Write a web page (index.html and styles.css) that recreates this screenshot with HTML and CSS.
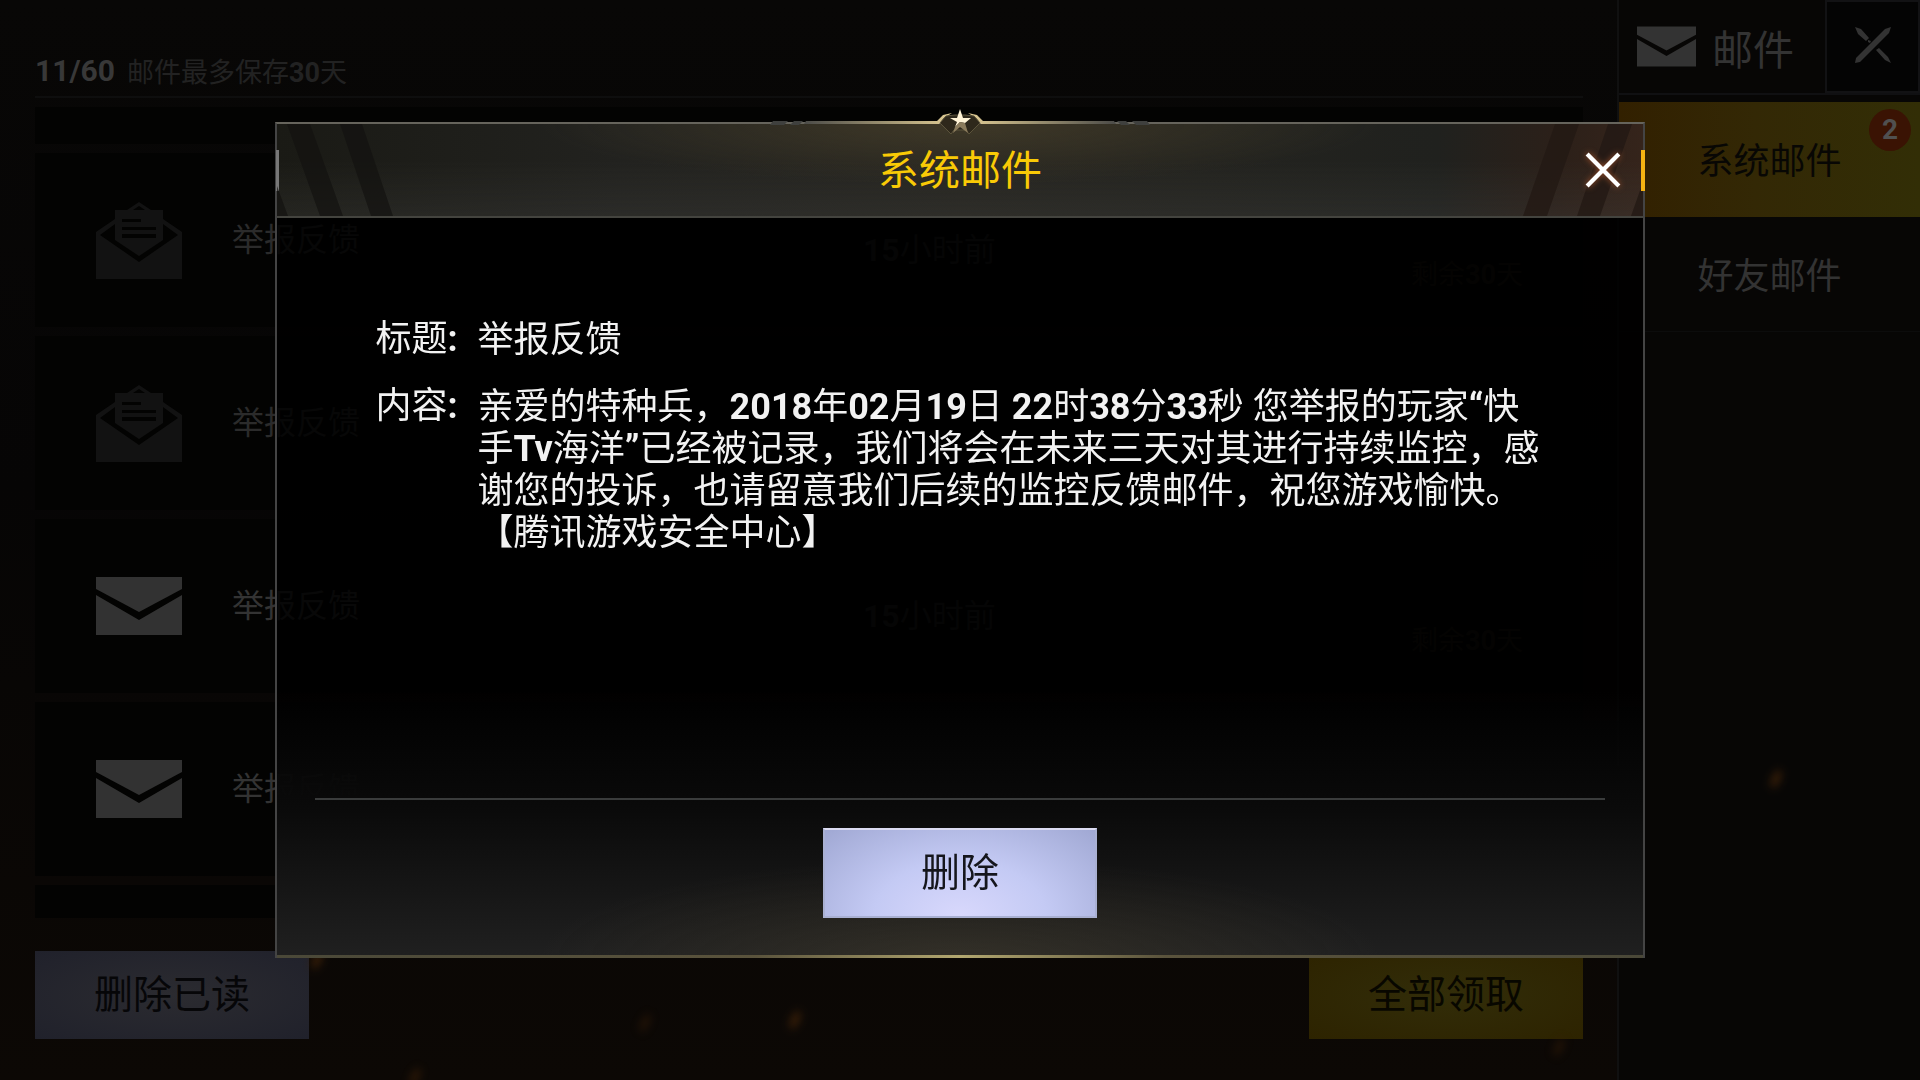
FILE: index.html
```html
<!DOCTYPE html>
<html lang="zh-CN">
<head>
  <meta charset="UTF-8">
  <meta name="viewport" content="width=device-width, initial-scale=1.0">
  <title>系统邮件</title>
  <link rel="stylesheet" href="styles.css">
</head>
<body>
  <!-- shared icons -->
  <svg class="icon-defs" aria-hidden="true">
    <symbol id="mail" viewBox="0 0 86 58">
      <path d="M0 0H86V12L43 35L0 12Z"/>
      <path d="M0 18L43 43L86 18V58H0Z"/>
    </symbol>
    <symbol id="mail-open" viewBox="0 0 86 77">
      <path d="M0 30L19 17V22L4 33L43 60L82 33L67 22V17L86 30V77H0Z"/>
      <path d="M31 8L43 0L55 8H49L43 4L37 8Z"/>
      <path fill-rule="evenodd" d="M19 8H67V38L43 54L19 38ZM26 17V20H45V17ZM26 25V28H60V25ZM26 32V36H60V32Z"/>
    </symbol>
  </svg>

  <div class="screen">
    <main class="inbox">
      <header class="inbox-head">
        <b class="count">11/60</b>
        <span class="hint">邮件最多保存<b>30</b>天</span>
      </header>

      <ul class="mail-list">
        <li class="mail cut-top"></li>
        <li class="mail read">
          <svg class="mail-icon open"><use href="#mail-open"/></svg>
          <span class="mail-title">举报反馈</span>
          <span class="mail-time"><b>15</b>小时前</span>
          <span class="mail-left">剩余<b>30</b>天</span>
        </li>
        <li class="mail read">
          <svg class="mail-icon open"><use href="#mail-open"/></svg>
          <span class="mail-title">举报反馈</span>
        </li>
        <li class="mail">
          <svg class="mail-icon"><use href="#mail"/></svg>
          <span class="mail-title">举报反馈</span>
          <span class="mail-time"><b>15</b>小时前</span>
          <span class="mail-left">剩余<b>30</b>天</span>
        </li>
        <li class="mail">
          <svg class="mail-icon"><use href="#mail"/></svg>
          <span class="mail-title">举报反馈</span>
        </li>
        <li class="mail cut-bottom"></li>
      </ul>

      <footer class="inbox-foot">
        <button class="btn btn-dim-blue">删除已读</button>
        <button class="btn btn-dim-gold">全部领取</button>
      </footer>
    </main>

    <aside class="sidebar">
      <div class="side-head">
        <div class="side-title">
          <svg class="side-icon"><use href="#mail"/></svg>
          <span>邮件</span>
        </div>
        <button class="side-close" aria-label="关闭">
          <svg viewBox="0 0 36 36">
            <path d="M0 0L6 2L14 11L11 14L3 7Z M21 23L24 21L33 30L36 36L30 33Z"/>
            <path d="M13 13L16 14L15 16L13 15Z"/>
            <path d="M36 0L34 6L5 35L0 36L1 31L30 2Z"/>
          </svg>
        </button>
      </div>
      <nav class="tabs">
        <button class="tab active">系统邮件<span class="badge">2</span></button>
        <button class="tab">好友邮件</button>
      </nav>
    </aside>
  </div>

  <i class="ember e1"></i>
  <i class="ember e2"></i>
  <i class="ember e3"></i>
  <i class="ember e4"></i>
  <i class="ember e5"></i>
  <i class="ember e6"></i>

  <div class="overlay">
    <section class="modal" role="dialog" aria-labelledby="modalTitle">
      <svg class="crest" viewBox="0 0 380 28" aria-hidden="true">
        <defs>
          <linearGradient id="wing">
            <stop offset="0" stop-color="#4b4b48"/>
            <stop offset=".5" stop-color="#e8d398"/>
            <stop offset="1" stop-color="#4b4b48"/>
          </linearGradient>
        </defs>
        <path fill="#3f403e" d="M3 12H18L14 16H0Z M24 12H33L29 16H20Z M377 12H362L366 16H380Z M356 12H347L351 16H360Z"/>
        <path fill="url(#wing)" d="M36 12H167L173 6L182 4L174 9L169 15H34Z M344 12H213L207 6L198 4L206 9L211 15H346Z"/>
        <path fill="#2e281b" stroke="#5c543c" d="M170 14L176 7L185 6H195L204 7L210 14L199 25L196 21H184L181 25Z"/>
        <path fill="#fff3d6" d="M190 0L193 9L201 9L195 14L190 13L185 18L187 13L180 9L187 9Z"/>
        <path fill="#8b7b5c" d="M195 14L198 24L190 18L183 24L185 18L190 13Z"/>
      </svg>

      <header class="modal-head">
        <svg class="stripes left" viewBox="0 0 130 92" preserveAspectRatio="none">
          <path d="M10 0H33L66 92H43Z M63 0H85L116 92H94Z M0 62L11 92H0Z"/>
        </svg>
        <svg class="stripes right" viewBox="0 0 150 92" preserveAspectRatio="none">
          <path d="M62 0H86L54 92H30Z M115 0H139L107 92H84Z M150 58L138 92H150Z"/>
        </svg>
        <h1 class="modal-title" id="modalTitle">系统邮件</h1>
        <button class="modal-close" aria-label="关闭">
          <svg viewBox="0 0 34 34"><path d="M2 2L32 32M32 2L2 32"/></svg>
        </button>
      </header>

      <dl class="letter">
        <dt>标题<b>:</b></dt>
        <dd>举报反馈</dd>
        <dt>内容<b>:</b></dt>
        <dd>亲爱的特种兵，<b>2018</b>年<b>02</b>月<b>19</b>日<b> 22</b>时<b>38</b>分<b>33</b>秒<b> </b>您举报的玩家<b>“</b>快手<b>Tv</b>海洋<b>”</b>已经被记录，我们将会在未来三天对其进行持续监控，感谢您的投诉，也请留意我们后续的监控反馈邮件，祝您游戏愉快。<br>【腾讯游戏安全中心】</dd>
      </dl>

      <footer class="modal-foot">
        <button class="btn btn-blue">删除</button>
      </footer>
    </section>
  </div>
</body>
</html>
```

FILE: styles.css
```css
* {
  box-sizing: border-box;
}
body {
  margin: 0;
  background: linear-gradient(#080706, #060505 45%, #0c0805);
  color: #333;
  font-family: Roboto, "Noto Sans CJK SC", sans-serif;
  overflow: hidden;
}
b {
  font-weight: 700;
}
button {
  border: none;
  padding: 0;
  background: none;
  color: inherit;
  font-family: inherit;
  cursor: pointer;
}
.icon-defs {
  position: absolute;
  width: 0;
  height: 0;
}

/* inbox behind the dialog */
.screen {
  display: grid;
  grid-template-columns: 1fr 303px;
  min-height: 100vh;
}
.inbox {
  display: flex;
  flex-direction: column;
  padding: 44px 34px 41px 35px;
}
.inbox-head {
  display: flex;
  align-items: center;
  gap: 12px;
  height: 54px;
  border-bottom: 2px solid #0e0e0e;
}
.count {
  font-size: 30px;
  color: #383838;
}
.hint {
  font-size: 27px;
  color: #222;
}
.mail-list {
  display: flex;
  flex-direction: column;
  gap: 9px;
  flex: 1;
  margin: 9px 0 33px;
  padding: 0;
  list-style: none;
}
.mail {
  display: grid;
  grid-template-columns: 86px 681px 1fr 172px;
  align-items: center;
  height: 174px;
  padding-left: 61px;
  background: #030302;
  font-size: 32px;
}
.cut-top {
  height: 37px;
}
.cut-bottom {
  height: auto;
  flex: 1;
}
.mail-icon {
  width: 86px;
  height: 58px;
  fill: #323232;
}
.mail-icon.open {
  height: 77px;
  fill: #121212;
}
.mail-title {
  padding: 0 0 6px 50px;
}
.read .mail-title {
  color: #2b2b2b;
}
.mail-time {
  padding-top: 14px;
  color: #202020;
}
.mail-left {
  padding-top: 64px;
  font-size: 27px;
  color: #1c180f;
}
.inbox-foot {
  display: flex;
  justify-content: space-between;
}

.btn {
  width: 274px;
  height: 88px;
  padding-bottom: 8px;
  font-size: 39px;
}
.btn-dim-blue {
  background: radial-gradient(ellipse at center, #2b2b30, #20212b);
  color: #060608;
}
.btn-dim-gold {
  background: radial-gradient(ellipse at center, #322d09, #2d2300);
  color: #080700;
}
.btn-blue {
  height: 90px;
  border: 2px solid #a9b0d2;
  border-top-color: #dcdcf2;
  background: radial-gradient(ellipse at 50% 100%, #d8d8fc, #c4caf4 45%, #a0a8d3);
  color: #15161c;
}

/* right column */
.sidebar {
  border-left: 2px solid #101010;
  background: #070605;
}
.side-head {
  display: flex;
  height: 95px;
  border-bottom: 2px solid #101012;
}
.side-title {
  display: flex;
  align-items: center;
  gap: 16px;
  flex: 1;
  padding-left: 18px;
  font-size: 41px;
}
.side-icon {
  width: 59px;
  height: 41px;
  fill: #333;
}
.side-close {
  width: 95px;
  border: 2px solid #121214;
  background: #040404;
}
.side-close svg {
  width: 36px;
  height: 36px;
  fill: #333;
}
.tabs {
  display: flex;
  flex-direction: column;
  padding-top: 7px;
}
.tab {
  position: relative;
  height: 115px;
  padding-bottom: 3px;
  border-bottom: 1px solid #0c0c0c;
  font-size: 36px;
}
.tab.active {
  border-bottom: none;
  background: linear-gradient(90deg, #322000, #332805 45%, #322e06);
  color: #080704;
}
.badge {
  position: absolute;
  top: 7px;
  right: 9px;
  width: 42px;
  height: 42px;
  border-radius: 50%;
  background: #3a1303;
  color: #505050;
  font-size: 28px;
  font-weight: 700;
  line-height: 42px;
}

.ember {
  position: absolute;
  width: 8px;
  height: 20px;
  border-radius: 50%;
  background: #3a1f08;
  filter: blur(4px);
  transform: rotate(25deg);
}
.e1 { left: 41.2%; top: 93.5%; }
.e2 { left: 92.3%; top: 71.2%; }
.e3 { left: 33.4%; top: 93.8%; opacity: .5; }
.e4 { left: 21.4%; top: 98.8%; opacity: .7; }
.e5 { left: 81%; top: 96%; opacity: .5; }
.e6 { left: 16.3%; top: 88%; }

/* dialog */
.overlay {
  position: fixed;
  inset: 0;
  display: flex;
  align-items: center;
  justify-content: center;
}
.modal {
  position: relative;
  display: flex;
  flex-direction: column;
  width: 71.4%;
  min-height: 77.4%;
  border: 2px solid #444;
  border-top-color: #66645c;
  border-bottom: none;
  background:
    linear-gradient(90deg, #4a4838, #5a533c 35%, #b3a870 50%, #5a533c 65%, #4a4838) bottom / 100% 3px no-repeat,
    radial-gradient(ellipse 420px 100px at 50% 100%, rgba(80, 72, 52, .4), transparent),
    linear-gradient(transparent 68%, #0a0a0a 82%, #202020),
    rgba(0, 0, 0, .84);
}
.crest {
  position: absolute;
  top: -15px;
  left: 50%;
  z-index: 1;
  width: 380px;
  height: 28px;
  transform: translateX(-50%);
}
.modal-head {
  position: relative;
  display: flex;
  align-items: center;
  justify-content: center;
  height: 94px;
  border-bottom: 2px solid #44443f;
  background:
    radial-gradient(ellipse 420px 60px at 50% 0, rgba(100, 85, 50, .4), transparent),
    linear-gradient(rgba(0, 0, 0, 0) 40%, rgba(70, 70, 68, .25)),
    linear-gradient(90deg, #1a1a15, #22221f 25%, #262520 50%, #20211e 85%, #2c2019 94%, #35241b);
}
/* side ticks on the frame */
.modal-head::before,
.modal-head::after {
  content: "";
  position: absolute;
  top: 26px;
  left: -1px;
  width: 3px;
  height: 41px;
  background: #777;
}
.modal-head::after {
  left: auto;
  right: -2px;
  width: 4px;
  background: #f5b312;
}
.stripes {
  position: absolute;
  top: 0;
  height: 100%;
}
.stripes.left {
  left: 0;
  width: 130px;
  fill: #131210;
  opacity: .7;
}
.stripes.right {
  right: 0;
  width: 150px;
  fill: #231914;
  opacity: .8;
}
.modal-title {
  margin: 0;
  padding-bottom: 6px;
  color: #f9ca06;
  font-size: 41px;
  font-weight: 400;
}
.modal-close {
  position: absolute;
  top: 28px;
  right: 22px;
  width: 36px;
  height: 36px;
}
.modal-close svg {
  display: block;
  width: 36px;
  height: 36px;
  fill: none;
  stroke: #fff;
  stroke-width: 4;
  filter: drop-shadow(0 0 3px #a0522d);
}
.letter {
  display: grid;
  grid-template-columns: 102px 1fr;
  align-content: start;
  row-gap: 25px;
  flex: 1;
  margin: 0;
  padding: 101px 102px 23px 99px;
  color: #f2f2f2;
  font-size: 36px;
  line-height: 42px;
}
.letter dt {
  line-height: 40px;
}
.letter dd {
  margin: 0;
  text-spacing-trim: space-all;
}
.modal-foot {
  display: flex;
  justify-content: center;
  margin: 0 38px;
  padding: 28px 0 40px;
  border-top: 2px solid #3a3c3c;
}
```
